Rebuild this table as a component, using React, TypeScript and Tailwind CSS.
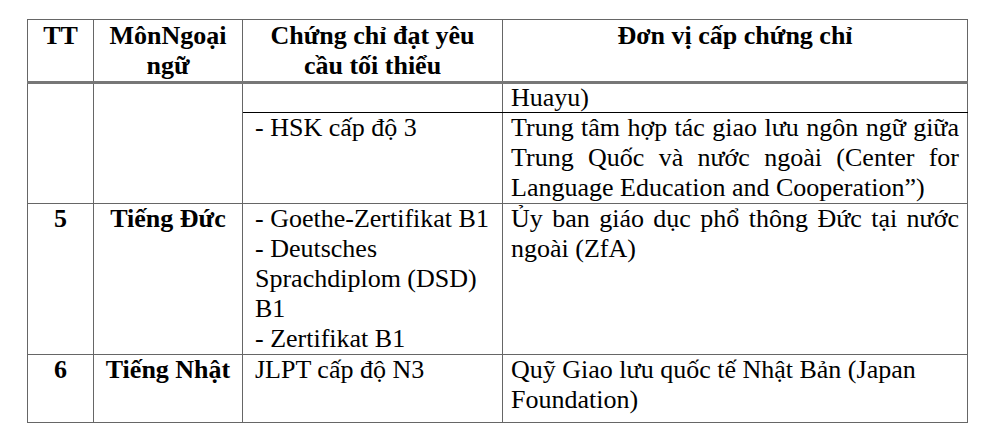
import React from "react";

const B = "border border-[#666666]";

export default function App() {
  return (
    <div className="w-[984px] h-[432px] bg-white pt-[19px] pl-[27px] text-black font-['Liberation_Serif','Times_New_Roman',serif]">
      <table className="border-collapse table-fixed w-[940px] text-[26px] leading-[30px] font-['Liberation_Serif','Times_New_Roman',serif]">
        <colgroup>
          <col className="w-[66px]" />
          <col className="w-[149px]" />
          <col className="w-[260px]" />
          <col className="w-[465px]" />
        </colgroup>
        <thead>
          <tr>
            <th className={`${B} border-b-[3px] border-b-[#777777] align-top text-center font-bold px-1 pt-[1px]`}>TT</th>
            <th className={`${B} border-b-[3px] border-b-[#777777] align-top text-center font-bold px-2 pt-[1px]`}>MônNgoại ngữ</th>
            <th className={`${B} border-b-[3px] border-b-[#777777] align-top text-center font-bold px-2 pt-[1px]`}>Chứng chỉ đạt yêu cầu tối thiểu</th>
            <th className={`${B} border-b-[3px] border-b-[#777777] align-top text-center font-bold px-2 pt-[1px]`}>Đơn vị cấp chứng chỉ</th>
          </tr>
        </thead>
        <tbody>
          <tr>
            <td rowSpan={2} className={`${B} align-top`}></td>
            <td rowSpan={2} className={`${B} align-top`}></td>
            <td className={`${B} border-b-black align-top pl-[12px] pr-[4px] leading-[28px]`}></td>
            <td className={`${B} border-b-black align-top px-[8px] text-justify leading-[28px]`}>Huayu)</td>
          </tr>
          <tr>
            <td className={`${B} align-top pl-[12px] pr-[4px]`}>- HSK cấp độ 3</td>
            <td className={`${B} align-top px-[8px] text-justify`}>
              Trung tâm hợp tác giao lưu ngôn ngữ giữa Trung Quốc và nước ngoài (Center for Language Education and Cooperation”)
            </td>
          </tr>
          <tr>
            <td className={`${B} align-top text-center font-bold`}>5</td>
            <td className={`${B} align-top text-center font-bold`}>Tiếng Đức</td>
            <td className={`${B} align-top pl-[12px] pr-[4px]`}>
              <div>- Goethe-Zertifikat B1</div>
              <div>- Deutsches Sprachdiplom (DSD) B1</div>
              <div>- Zertifikat B1</div>
            </td>
            <td className={`${B} align-top px-[8px] text-justify`}>
              Ủy ban giáo dục phổ thông Đức tại nước ngoài (ZfA)
            </td>
          </tr>
          <tr>
            <td className={`${B} align-top text-center font-bold pb-[7px]`}>6</td>
            <td className={`${B} align-top text-center font-bold pb-[7px]`}>Tiếng Nhật</td>
            <td className={`${B} align-top pl-[12px] pr-[4px] pb-[7px]`}>JLPT cấp độ N3</td>
            <td className={`${B} align-top px-[8px] pb-[7px]`}>
              Quỹ Giao lưu quốc tế Nhật Bản (Japan Foundation)
            </td>
          </tr>
        </tbody>
      </table>
    </div>
  );
}
